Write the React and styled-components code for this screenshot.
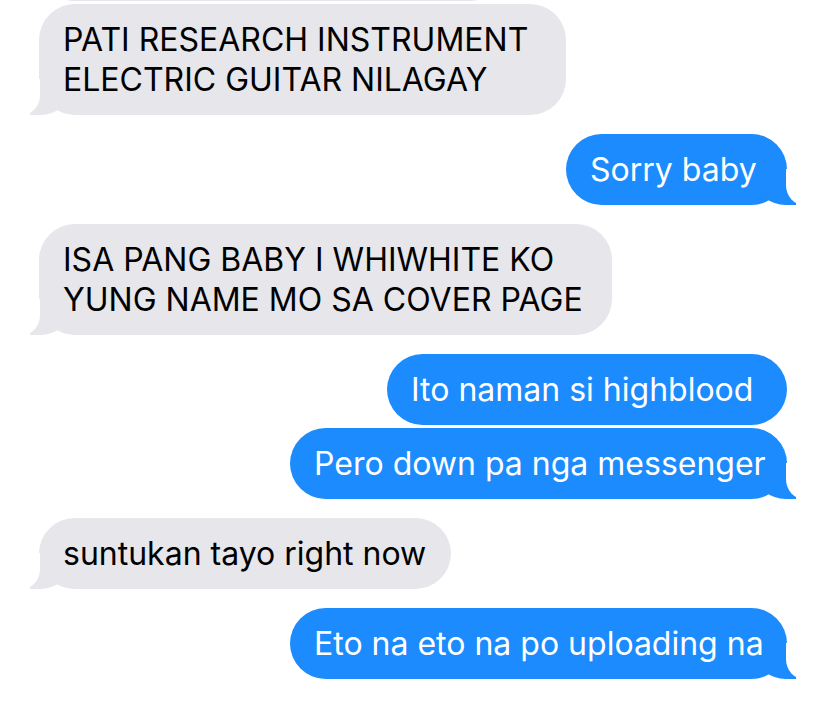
import styled, { createGlobalStyle, css } from "styled-components";

const GlobalStyle = createGlobalStyle`
  html, body {
    margin: 0;
    padding: 0;
    background: #ffffff;
  }
  body {
    font-family: Inter, "Noto Sans", "Liberation Sans", sans-serif;
    -webkit-font-smoothing: antialiased;
  }
`;

const Screen = styled.div`
  width: 828px;
  height: 702px;
  overflow: hidden;
  background: #ffffff;
`;

const Thread = styled.div`
  display: flex;
  flex-direction: column;
  padding: 0 41px 0 39px;
  margin-top: -73px;
`;

const tail = (mine, bg) => css`
  &::before,
  &::after {
    content: "";
    position: absolute;
    bottom: 0;
    height: 36px;
  }
  &::before {
    width: 40px;
    background: ${bg};
    ${mine
      ? css`
          right: -9px;
          border-bottom-left-radius: 30px 26px;
        `
      : css`
          left: -9px;
          border-bottom-right-radius: 30px 26px;
        `}
  }
  &::after {
    width: 20px;
    background: #ffffff;
    ${mine
      ? css`
          right: -19px;
          border-bottom-left-radius: 18px 20px;
        `
      : css`
          left: -19px;
          border-bottom-right-radius: 18px 20px;
        `}
  }
`;

const Bubble = styled.div`
  position: relative;
  box-sizing: border-box;
  width: ${(p) => p.$width}px;
  align-self: ${(p) => (p.$mine ? "flex-end" : "flex-start")};
  margin-top: ${(p) => (p.$grouped ? 3 : 19)}px;
  padding: 15.5px 20px 15.5px 24px;
  border-radius: 36px;
  background: ${(p) => (p.$mine ? "#1b8bfd" : "#e6e6eb")};
  color: ${(p) => (p.$mine ? "#ffffff" : "#000000")};
  font-size: 32px;
  line-height: 40px;
  letter-spacing: 0;
  white-space: nowrap;
  ${(p) => p.$tail && tail(p.$mine, p.$mine ? "#1b8bfd" : "#e6e6eb")}
`;

const Line = styled.span`
  display: block;
  position: relative;
  z-index: 1;
  min-height: 40px;
`;

// the first bubble is scrolled almost out of view, only its bottom edge shows
const messages = [
  { mine: false, width: 466, lines: [""], tail: false, grouped: true },
  {
    mine: false,
    width: 527,
    lines: ["PATI RESEARCH INSTRUMENT", "ELECTRIC GUITAR NILAGAY"],
    tail: true,
    grouped: true,
  },
  { mine: true, width: 221, lines: ["Sorry baby"], tail: true },
  {
    mine: false,
    width: 573,
    lines: ["ISA PANG BABY I WHIWHITE KO", "YUNG NAME MO SA COVER PAGE"],
    tail: true,
  },
  { mine: true, width: 400, lines: ["Ito naman si highblood"], tail: false },
  {
    mine: true,
    width: 497,
    lines: ["Pero down pa nga messenger"],
    tail: true,
    grouped: true,
  },
  { mine: false, width: 412, lines: ["suntukan tayo right now"], tail: true },
  { mine: true, width: 497, lines: ["Eto na eto na po uploading na"], tail: true },
];

export default function App() {
  return (
    <Screen>
      <GlobalStyle />
      <Thread>
        {messages.map((m, i) => (
          <Bubble
            key={i}
            $mine={m.mine}
            $width={m.width}
            $tail={m.tail}
            $grouped={m.grouped}
          >
            {m.lines.map((l, j) => (
              <Line key={j}>{l}</Line>
            ))}
          </Bubble>
        ))}
      </Thread>
    </Screen>
  );
}
